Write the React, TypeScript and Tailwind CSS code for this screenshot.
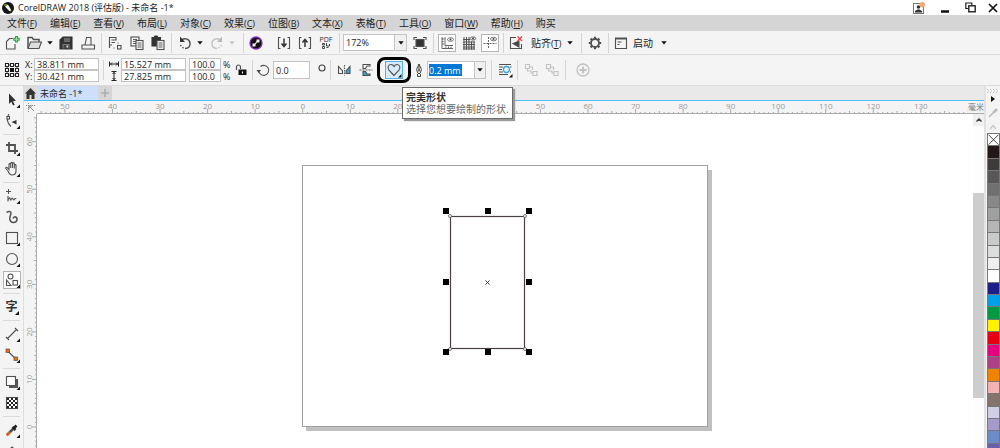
import type { ReactNode } from "react";
import clsx from "clsx";

const MENUS: [string, string?][] = [
  ["文件", "F"],
  ["编辑", "E"],
  ["查看", "V"],
  ["布局", "L"],
  ["对象", "C"],
  ["效果", "C"],
  ["位图", "B"],
  ["文本", "X"],
  ["表格", "T"],
  ["工具", "O"],
  ["窗口", "W"],
  ["帮助", "H"],
  ["购买"],
];

const SWATCHES = [
  "#231815", "#3e3a39", "#595757", "#727171", "#898989", "#9fa0a0", "#b5b5b6", "#c9caca",
  "#dcdddd", "#efefef", "#ffffff", "#1d2088", "#00a0e9", "#009944", "#fff100", "#e60012",
  "#e4007f", "#ae4084", "#f08300", "#f5b2b2", "#84736a", "#d0cde6", "#a59aca", "#6c8cc7",
  "#6a5fa8",
];

// ruler scale: screen pixels per millimetre at 172% zoom
const PX_PER_MM = 4.755;
const ORIGIN_X = 265.7;
const ORIGIN_Y = 313;
// labels that sit under the open tooltip
const COVERED_MM = [30, 40];

function Icon({ children, size = 16 }: { children: ReactNode; size?: number }) {
  return (
    <svg
      width={size}
      height={size}
      viewBox="0 0 16 16"
      fill="none"
      stroke="#505050"
      strokeWidth="1.1"
      className="shrink-0"
      aria-hidden="true"
    >
      {children}
    </svg>
  );
}

function ToolButton({
  label,
  children,
  active,
  disabled,
}: {
  label: string;
  children: ReactNode;
  active?: boolean;
  disabled?: boolean;
}) {
  return (
    <button
      type="button"
      aria-label={label}
      disabled={disabled}
      className={clsx(
        "flex h-[18px] w-[18px] shrink-0 items-center justify-center",
        active && "border border-[#b4b4b4] bg-white",
        disabled && "opacity-30",
      )}
    >
      {children}
    </button>
  );
}

function Arrow() {
  return (
    <svg width="6" height="4" viewBox="0 0 6 4" aria-hidden="true">
      <path d="M0.3 0.3h5.4L3 3.500z" fill="#111" />
    </svg>
  );
}

function Caret({ label, faded }: { label: string; faded?: boolean }) {
  return (
    <button type="button" aria-label={label} className={clsx("flex shrink-0 items-center", faded && "opacity-20")}>
      <Arrow />
    </button>
  );
}

function Group({ className, children }: { className?: string; children: ReactNode }) {
  return <div className={clsx("flex h-5 shrink-0 items-center", className)}>{children}</div>;
}

function Field({ label, value, className }: { label: string; value: string; className?: string }) {
  return (
    <input
      aria-label={label}
      defaultValue={value}
      className={clsx("border border-[#c4c4c4] bg-white pl-0.5 leading-none text-[#222] outline-none", className)}
    />
  );
}

function TitleBar() {
  return (
    <header className="flex h-[15px] shrink-0 items-center bg-white pl-0.5 text-[9px] leading-none">
      <svg width="12" height="12" viewBox="0 0 12 12" aria-hidden="true">
        <circle cx="6" cy="6" r="6" fill="#161616" />
        <path d="M2.2 3.2c2-1 4 .2 4.800 2l1.800 4" stroke="#8cc63f" strokeWidth="1.300" fill="none" />
        <path d="M3 4.500l4.600 4.800 1.400-1.200-3.200-5z" fill="#fff" />
      </svg>
      <h1 className="flex-1 pl-1 text-[#222]">CorelDRAW 2018 (评估版) - 未命名 -1*</h1>
      <div className="flex items-center gap-3 pr-0.5">
        <button type="button" aria-label="登录" className="pr-1">
          <svg width="12" height="12" viewBox="0 0 12 12" fill="none" aria-hidden="true">
            <rect x="0.5" y="1.500" width="10" height="10" stroke="#777" />
            <circle cx="5.500" cy="5" r="1.800" fill="#333" />
            <path d="M2 10.500V9l2.500-1.500h2L9 9v1.500z" fill="#333" />
            <circle cx="9.300" cy="2.700" r="2.700" fill="#f6a575" />
          </svg>
        </button>
        <button type="button" aria-label="最小化" className="pr-1">
          <svg width="8" height="12" viewBox="0 0 8 12" aria-hidden="true">
            <path d="M0 9.500h8" stroke="#111" strokeWidth="2.500" />
          </svg>
        </button>
        <button type="button" aria-label="还原">
          <svg width="11" height="11" viewBox="0 0 11 11" fill="none" stroke="#222" aria-hidden="true">
            <path d="M3.500 6.500h-2.700v-5.500h6v2.500" strokeWidth="1.200" />
            <rect x="3.800" y="3.800" width="6.400" height="6" strokeWidth="1.400" />
          </svg>
        </button>
        <button type="button" aria-label="关闭">
          <svg width="10" height="10" viewBox="0 0 10 10" stroke="#111" strokeWidth="1.700" aria-hidden="true">
            <path d="M1 1l8 8M9 1l-8 8" />
          </svg>
        </button>
      </div>
    </header>
  );
}

function MenuBar() {
  return (
    <nav className="flex h-4 shrink-0 items-center gap-[13px] bg-[#d5d5d5] pl-[7px] text-[10px] leading-none text-[#222]">
      {MENUS.map(([name, key]) => (
        <button type="button" key={name} className="flex items-center whitespace-nowrap">
          {name}
          {key && (
            <span className="text-[9px]">
              (<u>{key}</u>)
            </span>
          )}
        </button>
      ))}
    </nav>
  );
}

function StandardBar() {
  return (
    <div className="flex h-6 shrink-0 items-center border-b border-[#dcdcdc] bg-[#f4f4f4]">
      <Group className="w-[101px] justify-between pr-1 pl-[3px]">
        <ToolButton label="新建">
          <Icon>
            <path d="M9 3.500H5.500L2.500 6.500v7.500h8.500V9" />
            <path d="M12.500 1v6.500M9.250 4.250h6.500" stroke="#2aa84c" strokeWidth="3" />
            <path d="M12.500 2v4.500M10.250 4.250h4.500" stroke="#c4ecce" strokeWidth="0.700" />
          </Icon>
        </ToolButton>
        <Group className="gap-1">
          <ToolButton label="打开">
            <Icon>
              <path d="M2 13V2.500h4l1.500 2H13V7" strokeWidth="1.500" />
              <path d="M2 13.500l2.500-6.500h11L13 13.500z" fill="#dedede" />
            </Icon>
          </ToolButton>
          <Caret label="最近的文件" />
        </Group>
        <ToolButton label="保存">
          <Icon>
            <path d="M2 5l3-3h9v12H2z" fill="#333" stroke="#333" />
            <path d="M6 4h6M6 6h6" stroke="#aaa" strokeWidth="0.900" />
            <path d="M5 13.500v-4h6v4" stroke="#777" fill="#444" />
            <path d="M8.500 10.500h1.500v2H8.500z" fill="#ddd" stroke="none" />
          </Icon>
        </ToolButton>
        <ToolButton label="打印">
          <Icon>
            <path d="M5 10l1.500-7.500H11V10M5 10H2v4h12.500v-4H11M4.500 10H11" />
          </Icon>
        </ToolButton>
      </Group>
      <Group className="w-[70px] justify-between border-l border-[#d4d4d4] px-1">
        <ToolButton label="剪切">
          <Icon>
            <path d="M2.500 13V2.500H9V5H4.500M4.500 7.500H8M2.500 10H5" />
            <rect x="10.500" y="10.500" width="3.500" height="3.500" />
            <path d="M10.500 8h1M6.500 13h1" />
          </Icon>
        </ToolButton>
        <ToolButton label="复制">
          <Icon>
            <rect x="2" y="2" width="8" height="9" />
            <path d="M4 4.500h4M4 6.500h3M4 8.500h3" strokeWidth="0.900" />
            <rect x="7" y="5.500" width="7" height="9" fill="#f4f4f4" />
            <path d="M8.500 8h4M8.500 10h4M8.500 12h4" strokeWidth="0.900" />
          </Icon>
        </ToolButton>
        <ToolButton label="粘贴">
          <Icon>
            <path d="M2 2.500h2L5 1h2l1 1.500h2.500V11H2z" fill="#333" stroke="#333" />
            <rect x="7" y="5.500" width="7" height="9" fill="#f4f4f4" />
            <path d="M8.500 8h4M8.500 10h4M8.500 12h4" strokeWidth="0.900" />
          </Icon>
        </ToolButton>
      </Group>
      <Group className="w-[72px] justify-between border-l border-[#d4d4d4] pr-2 pl-1">
        <Group className="gap-[3px]">
          <ToolButton label="撤消">
            <Icon>
              <path d="M4.500 5C8 2.500 13 4 13 8.500c0 3-2 5-5 5" strokeWidth="1.400" />
              <path d="M6.500 13.200l-4-4" strokeWidth="1.400" strokeDasharray="1.500 1.500" />
              <path d="M3 1.500v5.500h5z" fill="#333" stroke="none" />
            </Icon>
          </ToolButton>
          <Caret label="撤消列表" />
        </Group>
        <Group className="gap-[3px]">
          <ToolButton label="重做" disabled>
            <Icon>
              <path d="M11.500 5C8 2.500 3 4 3 8.500c0 3 2 5 5 5" strokeWidth="1.400" />
              <path d="M9.500 13.200l4-4" strokeWidth="1.400" strokeDasharray="1.500 1.500" />
              <path d="M13 1.500v5.500H8z" fill="#333" stroke="none" />
            </Icon>
          </ToolButton>
          <Caret label="重做列表" faded />
        </Group>
      </Group>
      <Group className="w-[96px] justify-between border-l border-[#d4d4d4] pr-1 pl-[3px]">
        <ToolButton label="搜索内容">
          <Icon>
            <circle cx="8" cy="8" r="6" fill="#111" stroke="#7d2cb0" strokeWidth="1.300" />
            <path d="M6 10.500l4-5" stroke="#ddd" strokeWidth="1.200" />
            <rect x="4.500" y="8.500" width="3" height="3" fill="#eee" stroke="none" />
            <rect x="8.500" y="4.500" width="3" height="3" fill="#eee" stroke="none" />
          </Icon>
        </ToolButton>
        <Group className="gap-[3px]">
          <ToolButton label="导入">
            <Icon>
              <path d="M4.500 2.500H2.500v11h2M11.500 2.500h2v11h-2" />
              <path d="M8 3.500V11M5.500 8.500L8 11.500l2.500-3" strokeWidth="1.500" stroke="#333" />
            </Icon>
          </ToolButton>
          <ToolButton label="导出">
            <Icon>
              <path d="M4.500 2.500H2.500v11h2M11.500 2.500h2v11h-2" />
              <path d="M8 12V5M5.500 7.500L8 4.500l2.500 3" strokeWidth="1.500" stroke="#333" />
            </Icon>
          </ToolButton>
          <button
            type="button"
            aria-label="发布为 PDF"
            className="flex h-[18px] w-[18px] flex-col items-center justify-center text-[7px] leading-[7px] text-[#333]"
          >
            PDF
            <svg width="8" height="6" viewBox="0 0 8 6" fill="none" stroke="#444" aria-hidden="true">
              <path d="M0.500 0.500h2v1.500h-2zM0.500 3.500h2v2h-2zM4.500 0v3h3V1M4.500 4.500h2" />
            </svg>
          </button>
        </Group>
      </Group>
      <Group className="w-[94px] gap-1 border-l border-[#d4d4d4] pl-[3px]">
        <div className="relative flex h-[17px] w-16 items-center border border-[#c4c4c4] bg-white">
          <select aria-label="缩放级别" className="h-full w-full appearance-none pl-0.5 text-[9px] text-[#222] outline-none">
            <option>172%</option>
            <option>100%</option>
            <option>50%</option>
          </select>
          <span className="pointer-events-none absolute inset-y-0 right-0 flex w-3 items-center justify-center border-l border-[#c4c4c4] bg-[#f0f0f0]">
            <Arrow />
          </span>
        </div>
        <ToolButton label="全屏预览">
          <Icon>
            <rect x="4" y="4.500" width="8" height="7" fill="#333" />
            <path d="M2 5V2.500h3M11 2.500h3V5M14 11v2.500h-3M5 13.500H2V11" />
          </Icon>
        </ToolButton>
      </Group>
      <Group className="w-[70px] justify-between border-l border-[#d4d4d4] px-1">
        <ToolButton label="显示标尺" active>
          <Icon>
            <path d="M3 2v11.500h11M6 2v8.500h8M3 4h2M3 6.500h1.500M3 9h2M7 13v-1.500M9.500 13v-1.500M12 13v-1.500" strokeWidth="0.900" />
            <ellipse cx="11.500" cy="4.500" rx="3" ry="1.800" strokeWidth="0.800" />
            <circle cx="11.500" cy="4.500" r="1" fill="#444" stroke="none" />
          </Icon>
        </ToolButton>
        <ToolButton label="显示网格">
          <Icon>
            <path d="M2 4.500h7M2 7h12M2 9.500h12M2 12h12M2 14h12M3 2v12.500M5.500 2v12.500M8 2v12.500M10.500 6.500v8M13 6.500v8" strokeWidth="1" />
            <ellipse cx="12" cy="3.500" rx="2.800" ry="1.600" strokeWidth="0.800" />
            <circle cx="12" cy="3.500" r="1" fill="#444" stroke="none" />
          </Icon>
        </ToolButton>
        <ToolButton label="显示辅助线" active>
          <Icon>
            <path d="M1.500 8.500h13M6.500 2v12" strokeDasharray="2 1" strokeWidth="0.900" />
            <ellipse cx="11.500" cy="4" rx="3" ry="1.800" strokeWidth="0.800" />
            <circle cx="11.500" cy="4" r="1" fill="#444" stroke="none" />
          </Icon>
        </ToolButton>
      </Group>
      <Group className="w-[78px] gap-1.5 border-l border-[#d4d4d4] pl-[3px]">
        <ToolButton label="关闭贴齐">
          <Icon>
            <path d="M8 2.500H2.500v11h11V9" />
            <path d="M11 6v6L5 8.500z" fill="#444" />
            <path d="M9.500 1.500l4.500 4.500M14 1.500L9.500 6" stroke="#e84545" strokeWidth="1.400" />
          </Icon>
        </ToolButton>
        <button type="button" className="flex items-center gap-1.5 text-[10px] leading-none whitespace-nowrap text-[#222]">
          <span>
            贴齐<span className="text-[9px]">(<u>T</u>)</span>
          </span>
          <Arrow />
        </button>
      </Group>
      <Group className="w-[27px] justify-center border-l border-[#d4d4d4]">
        <ToolButton label="选项">
          <Icon>
            <circle cx="8" cy="8" r="4" strokeWidth="1.800" />
            <path d="M8 1.800v2M8 12.200v2M1.800 8h2M12.200 8h2M3.600 3.600l1.400 1.400M11 11l1.400 1.400M12.400 3.600L11 5M5 11l-1.400 1.400" strokeWidth="2.200" />
          </Icon>
        </ToolButton>
      </Group>
      <Group className="gap-[3px] border-l border-[#d4d4d4] pl-[3px]">
        <ToolButton label="应用程序启动器">
          <Icon>
            <path d="M2 3.500h12" strokeWidth="2" />
            <path d="M2.500 3v10.500h11V3M4.500 7h4M4.500 9.500h2" />
          </Icon>
        </ToolButton>
        <button type="button" className="flex items-center gap-2 text-[10px] leading-none text-[#222]">
          启动
          <Arrow />
        </button>
      </Group>
    </div>
  );
}

function PropertyBar() {
  return (
    <div className="flex h-[31px] shrink-0 items-center border-b border-[#dcdcdc] bg-[#f4f4f4] text-[9px] leading-none text-[#222]">
      <Group className="w-[103px] gap-1 pl-[3px]">
        <ToolButton label="对象原点">
          <Icon>
            <path d="M3 3h10v10H3z" strokeWidth="1" />
            <path d="M1.500 1.500h3v3h-3zM6.500 1.500h3v3h-3zM11.500 1.500h3v3h-3zM1.500 6.500h3v3h-3zM11.500 6.500h3v3h-3zM1.500 11.500h3v3h-3zM6.500 11.500h3v3h-3zM11.500 11.500h3v3h-3z" fill="#fff" stroke="#222" />
            <path d="M6 6h4v4H6z" fill="#111" stroke="none" />
          </Icon>
        </ToolButton>
        <div className="flex flex-col">
          <label className="flex h-3 items-center">
            <span className="w-[9px]">X:</span>
            <Field label="X" value="38.811 mm" className="h-3 w-[65px]" />
          </label>
          <label className="flex h-3 items-center">
            <span className="w-[9px]">Y:</span>
            <Field label="Y" value="30.421 mm" className="h-3 w-[65px]" />
          </label>
        </div>
      </Group>
      <Group className="w-[149px] gap-[3px] border-l border-[#d4d4d4] pl-[5px]">
        <div className="flex flex-col">
          <div className="flex h-3 items-center gap-0.5">
            <svg width="10" height="8" viewBox="0 0 10 8" stroke="#222" fill="none" aria-hidden="true">
              <path d="M0.500 1.500v5M9.500 1.500v5M1 4h8M3 2.500L1.500 4 3 5.500M7 2.500L8.500 4 7 5.500" />
            </svg>
            <Field label="宽度" value="15.527 mm" className="h-3 w-[65px]" />
          </div>
          <div className="flex h-3 items-center gap-0.5">
            <svg width="10" height="10" viewBox="0 0 10 10" stroke="#222" fill="none" aria-hidden="true">
              <path d="M2.500 0.500h5M2.500 9.500h5M5 1v8M3.500 3L5 1.500 6.500 3M3.500 7L5 8.500 6.500 7" />
            </svg>
            <Field label="高度" value="27.825 mm" className="h-3 w-[65px]" />
          </div>
        </div>
        <div className="flex flex-col">
          <label className="flex h-3 items-center gap-0.5">
            <Field label="水平缩放" value="100.0" className="h-3 w-8" />%
          </label>
          <label className="flex h-3 items-center gap-0.5">
            <Field label="垂直缩放" value="100.0" className="h-3 w-8" />%
          </label>
        </div>
        <ToolButton label="锁定比率">
          <Icon>
            <path d="M2.500 8V5a2 2 0 014 0v2" strokeWidth="1.200" />
            <path d="M4.500 7.500h8v5.500h-8z" fill="#111" stroke="none" />
            <path d="M8.500 9.500v2" stroke="#fff" />
          </Icon>
        </ToolButton>
      </Group>
      <Group className="w-[78px] border-l border-[#d4d4d4] pl-px">
        <label htmlFor="angle" className="flex w-[19px] justify-center">
          <Icon>
            <path d="M4.500 4.500a5 5 0 11-1.800 4" strokeWidth="1.100" />
            <path d="M0.500 8h4.500L2.700 11z" fill="#444" stroke="none" />
          </Icon>
        </label>
        <input
          id="angle"
          defaultValue="0.0"
          className="h-[18px] w-[37px] border border-[#c4c4c4] bg-white pl-0.5 text-[#222] outline-none"
        />
        <svg width="8" height="16" viewBox="0 0 8 16" fill="none" className="ml-2" aria-hidden="true">
          <circle cx="4" cy="6" r="3" stroke="#444" strokeWidth="1.100" />
        </svg>
      </Group>
      <Group className="w-[161px] gap-0.5 border-l border-[#d4d4d4] pl-1">
        <Group className="gap-1">
          <ToolButton label="水平镜像">
            <Icon>
              <path d="M2.500 4.500v7h4V9z" />
              <path d="M8.500 3v10.500" strokeDasharray="1.500 1" />
              <path d="M14 4.500v7h-4V9z" fill="#36a4d8" />
            </Icon>
          </ToolButton>
          <ToolButton label="垂直镜像">
            <Icon>
              <path d="M5 6.500v-4h7v1.500H9L7.500 6.500z" />
              <path d="M1.500 8h13" strokeDasharray="2 1" />
              <path d="M5 9.500v4h7V12H9L7.500 9.500z" fill="#36a4d8" />
            </Icon>
          </ToolButton>
        </Group>
        <div className="relative flex h-[26px] w-[34px] shrink-0 items-center justify-center rounded-lg border-[3px] border-black">
          <button
            type="button"
            aria-label="完美形状"
            aria-describedby="shape-tip"
            className="flex h-[18px] w-[18px] items-center justify-center border border-[#4db5ea] bg-[#d9ecf9]"
          >
            <Icon>
              <path d="M8 13.500L3 8.200C1 5.500 2.500 2.500 5 2.500c1.500 0 2.500 1 3 2 .5-1 1.500-2 3-2 2.500 0 4 3 2 5.700z" />
              <path d="M15.500 12v3.500H12z" fill="#111" stroke="none" />
            </Icon>
          </button>
          <div
            id="shape-tip"
            role="tooltip"
            className="absolute top-[27px] left-[22px] z-10 flex flex-col border border-[#6b6b6b] bg-white px-[3px] py-[3px] text-[10px] leading-[12px] whitespace-nowrap text-[#666] shadow-[2px_2px_1px_#999]"
          >
            <strong className="text-[#333]">完美形状</strong>
            <span>选择您想要绘制的形状.</span>
          </div>
        </div>
        <label htmlFor="outline" className="flex w-3 justify-center">
          <svg width="10" height="16" viewBox="0 0 10 16" fill="none" stroke="#444" aria-hidden="true">
            <path d="M5 2L2.500 7.500 4 11.500h2l1.500-4zM5 2v6M3.500 12v2.500h3V12" />
            <circle cx="5" cy="8.300" r="0.800" />
          </svg>
        </label>
        <div className="flex h-[18px] w-[59px] shrink-0 items-center border border-[#c4c4c4] bg-white pl-px">
          <input
            id="outline"
            defaultValue="0.2 mm"
            className="h-3 w-[33px] bg-[#0078d7] text-white outline-none"
          />
          <span className="ml-auto flex h-full w-[11px] items-center justify-center border-l border-[#c4c4c4] bg-[#f0f0f0]">
            <Caret label="轮廓宽度" />
          </span>
        </div>
      </Group>
      <Group className="w-[26px] justify-center border-l border-[#d4d4d4]">
        <ToolButton label="文本换行">
          <Icon>
            <path d="M2 2.500h12M2 5h4M2 7.500h3M2 10h4M2 12.500h9M13 5h1.500M13 10h1" />
            <circle cx="9.500" cy="7.500" r="3" stroke="#36a4d8" fill="#e4f4fc" strokeWidth="1.300" />
            <path d="M15.500 12v3.500H12z" fill="#111" stroke="none" />
          </Icon>
        </ToolButton>
      </Group>
      <Group className="w-12 justify-between border-l border-[#d4d4d4] px-1">
        <ToolButton label="到图层前面" disabled>
          <Icon>
            <path d="M2.500 2.500h4v4h-4zM10 9.500h4v4h-4zM6.500 5h3v3M8 8.500v2.500h2" />
            <path d="M4.500 6.500V9H8" />
          </Icon>
        </ToolButton>
        <ToolButton label="到图层后面" disabled>
          <Icon>
            <path d="M2.500 2.500h4v4h-4zM10 9.500h4v4h-4zM6.500 5h3v3M8 8.500v2.500h2" />
            <path d="M4.500 6.500V9H8" />
          </Icon>
        </ToolButton>
      </Group>
      <Group className="border-l border-[#d4d4d4] pl-2">
        <ToolButton label="快速自定义" disabled>
          <Icon>
            <circle cx="8" cy="8" r="6" strokeWidth="1.300" />
            <path d="M8 4.500v7M4.500 8h7" strokeWidth="1.800" />
          </Icon>
        </ToolButton>
      </Group>
    </div>
  );
}

function Tool({
  label,
  children,
  flyout = true,
  active,
}: {
  label: string;
  children: ReactNode;
  flyout?: boolean;
  active?: boolean;
}) {
  return (
    <div className="flex h-[21px] shrink-0 items-center justify-center">
      <button
        type="button"
        aria-label={label}
        className={clsx("flex h-[18px] w-[18px] items-center justify-center", active && "border border-[#b4b4b4] bg-white")}
      >
        <Icon>
          {children}
          {flyout && <path d="M16 12.500v3.500h-3.500z" fill="#111" stroke="none" />}
        </Icon>
      </button>
    </div>
  );
}

function ToolRule() {
  return (
    <div className="flex h-1.5 shrink-0 items-center">
      <div className="h-px w-full bg-[#dadada]" />
    </div>
  );
}

function Toolbox() {
  return (
    <aside className="flex w-6 shrink-0 flex-col overflow-hidden border-r border-[#dedede] bg-[#f4f4f4] px-[3px] pt-[3px]">
      <Tool label="选择工具">
        <path d="M5 1.500v10.500l2.300-2.200L9 13.500l1.700-.8-1.700-3.500 3-.4z" fill="#333" stroke="none" />
      </Tool>
      <Tool label="形状工具">
        <path d="M5 1C2 5 3 10 7 13.500" />
        <rect x="3" y="3.500" width="2.500" height="2.500" fill="#fff" />
        <path d="M7.500 9l5-2v4.500z" fill="#333" stroke="none" />
      </Tool>
      <ToolRule />
      <Tool label="裁剪工具">
        <path d="M5 2v9h9M2 5h9v9" strokeWidth="1.800" />
      </Tool>
      <Tool label="平移工具">
        <path d="M4 10L1.800 7.500c-.5-1 .8-1.600 1.500-.8L5 8.500V3.500c0-1.200 1.700-1.200 1.700 0V7 2.500c0-1.200 1.800-1.200 1.800 0V7 2.800c0-1.200 1.800-1.200 1.800 0V7.500 4.500c0-1.200 1.700-1.200 1.700 0V10c0 2.500-1.500 4-4 4-2 0-3-1.500-4-4z" />
      </Tool>
      <ToolRule />
      <Tool label="手绘工具">
        <path d="M4.500 1v5M2 3.500h5" strokeWidth="1" />
        <path d="M4 8v5.500M4 12c2-4 2-2 2.500 0 .5 1 1-2 1.800-2s.5 2 1.500 2 .5-1.500 1.500-1.500h1" />
      </Tool>
      <Tool label="艺术笔工具" flyout={false}>
        <path d="M2.500 3.500c2-1.500 4.500-1.500 4.500.5 0 2-2 4-1 7s6 3.500 7 0c.5-3-3-4.500-4-1.500" strokeWidth="1.500" />
      </Tool>
      <Tool label="矩形工具">
        <rect x="2.500" y="2.500" width="11" height="11" />
      </Tool>
      <Tool label="椭圆形工具">
        <circle cx="8" cy="8" r="5.500" />
      </Tool>
      <Tool label="多边形工具" active>
        <circle cx="6.500" cy="4.500" r="2.500" />
        <path d="M2.500 8v5.500H7z" />
        <rect x="9" y="8.500" width="4.500" height="4.500" />
      </Tool>
      <ToolRule />
      <div className="flex h-[21px] shrink-0 items-center justify-center">
        <button type="button" aria-label="文本工具" className="relative h-[18px] w-[18px] text-[12px] leading-[18px] font-bold text-[#333]">
          字
          <svg width="4" height="4" viewBox="0 0 4 4" className="absolute right-px bottom-px" aria-hidden="true">
            <path d="M4 0v4H0z" fill="#111" />
          </svg>
        </button>
      </div>
      <ToolRule />
      <Tool label="平行度量工具">
        <path d="M3.500 12.500l9-9M2 11l3 3M11 2l3 3" />
      </Tool>
      <Tool label="直线连接器">
        <path d="M4 4.500l8 7.500" />
        <rect x="2" y="2" width="3.500" height="3.500" fill="#f26a0c" strokeWidth="0.700" />
        <rect x="10" y="10" width="3.500" height="3.500" fill="#f26a0c" strokeWidth="0.700" />
      </Tool>
      <ToolRule />
      <Tool label="阴影工具">
        <path d="M5 13h8V5" stroke="#555" strokeWidth="2.200" />
        <rect x="2.500" y="2.500" width="9" height="9" fill="#fff" />
      </Tool>
      <Tool label="透明度工具" flyout={false}>
        <rect x="2.500" y="2.500" width="11" height="11" fill="#fff" />
        <path d="M3 4h10M3 8h10M3 12h10" strokeDasharray="2 2" strokeWidth="2" stroke="#222" />
        <path d="M5 6h8M5 10h8" strokeDasharray="2 2" strokeWidth="2" stroke="#222" />
      </Tool>
      <ToolRule />
      <Tool label="颜色滴管工具">
        <path d="M9 7l-6 6" strokeWidth="2.500" />
        <path d="M6 10l-3.500 3.500" stroke="#e8640c" strokeWidth="1.800" />
        <path d="M8.500 5l3 3M10 6l2.500-2.500" strokeWidth="2.600" stroke="#222" />
      </Tool>
      <Tool label="交互式填充工具">
        <path d="M8 4l5.500 5L8 14 3 9z" fill="#333" />
      </Tool>
    </aside>
  );
}

function HorizontalRuler() {
  const ticks = Array.from({ length: 206 }, (_, i) => i - 55);
  const labels = ticks.filter((mm) => mm % 10 === 0 && mm < 140 && !COVERED_MM.includes(mm));
  return (
    <svg className="h-full w-full" aria-hidden="true">
      {ticks.map((mm) => {
        const x = ORIGIN_X + mm * PX_PER_MM;
        const len = mm % 10 === 0 ? 4 : mm % 5 === 0 ? 2 : 1;
        return <path key={mm} d={`M${x} ${12 - len}V12`} stroke="#aaa" />;
      })}
      {labels.map((mm) => (
        <text key={mm} x={ORIGIN_X + mm * PX_PER_MM} y="8" textAnchor="middle" fontSize="8" fill="#999">
          {Math.abs(mm)}
        </text>
      ))}
    </svg>
  );
}

function VerticalRuler() {
  const ticks = Array.from({ length: 72 }, (_, i) => i - 5);
  return (
    <svg className="h-full w-full" aria-hidden="true">
      {ticks.map((mm) => {
        const y = ORIGIN_Y - mm * PX_PER_MM;
        const len = mm % 10 === 0 ? 4 : mm % 5 === 0 ? 2 : 1;
        return <path key={mm} d={`M${12 - len} ${y}H12`} stroke="#aaa" />;
      })}
      {ticks
        .filter((mm) => mm % 10 === 0)
        .map((mm) => {
          const y = ORIGIN_Y - mm * PX_PER_MM;
          return (
            <text key={mm} x="8" y={y} textAnchor="middle" fontSize="8" fill="#999" transform={`rotate(-90 8 ${y})`}>
              {mm}
            </text>
          );
        })}
    </svg>
  );
}

function Canvas() {
  const handles = [
    [409, 97], [451, 97], [492, 97],
    [409, 168], [492, 168],
    [409, 238], [451, 238], [492, 238],
  ];
  const nodes = [[413, 102], [488, 102], [413, 235], [488, 235]];
  return (
    <svg className="block h-full w-full" role="img" aria-label="绘图窗口">
      <path d="M671 56h4v261H269v-4h402z" fill="#c0c0c0" />
      <rect x="265.500" y="51.500" width="405" height="261" fill="#fff" stroke="#a0a0a0" />
      <rect x="413.500" y="102.500" width="74" height="132" fill="#fff" stroke="#4a4040" strokeWidth="1.200" />
      <path d="M448.500 166.500l4 4M452.500 166.500l-4 4" stroke="#333" />
      {nodes.map(([x, y]) => (
        <circle key={`${x}-${y}`} cx={x} cy={y} r="1.500" fill="#fff" stroke="#555" strokeWidth="0.800" />
      ))}
      {handles.map(([x, y]) => (
        <rect key={`${x}-${y}`} x={x - 3} y={y - 3} width="6" height="6" fill="#000" />
      ))}
    </svg>
  );
}

function Workspace() {
  return (
    <main className="flex min-w-0 flex-1 flex-col">
      <div className="flex h-[15px] shrink-0 items-stretch border-b border-[#4fbdf0] bg-[#e9e9e9] text-[9px] leading-none">
        <button type="button" aria-label="欢迎屏幕" className="flex w-[13px] items-center justify-center bg-[#dcdcdc]">
          <svg width="11" height="11" viewBox="0 0 11 11" aria-hidden="true">
            <path d="M5.500 0L0 5.500h1.500V11H4.500V7h2v4h3V5.500H11z" fill="#333" />
          </svg>
        </button>
        <button type="button" className="w-[61px] bg-[#cce0fd] pl-[3px] text-left whitespace-nowrap text-[#222]">
          未命名 -1*
        </button>
        <button type="button" aria-label="新建文档" className="flex w-3.5 items-center justify-center bg-[#d6d6d6]">
          <svg width="8" height="8" viewBox="0 0 8 8" stroke="#aaa" strokeWidth="1.500" aria-hidden="true">
            <path d="M4 0v8M0 4h8" />
          </svg>
        </button>
      </div>
      <div className="flex h-[13px] shrink-0 bg-[#f4f4f4]">
        <div className="flex w-[13px] shrink-0 items-center justify-center">
          <svg width="9" height="9" viewBox="0 0 9 9" fill="none" stroke="#888" aria-hidden="true">
            <path d="M0 2.500h9M2.500 0v9" strokeDasharray="1 1" />
            <path d="M3 3l5 5M3 6V3h3" />
          </svg>
        </div>
        <div className="min-w-0 flex-1 border-b border-[#aaa]">
          <HorizontalRuler />
        </div>
        <span className="w-4 shrink-0 border-b border-[#aaa] text-[8px] leading-[12px] whitespace-nowrap text-[#777]">毫米</span>
      </div>
      <div className="flex min-h-0 flex-1">
        <div className="w-[13px] shrink-0 border-r border-[#aaa] bg-[#f4f4f4]">
          <VerticalRuler />
        </div>
        <div className="min-w-0 flex-1 bg-white">
          <Canvas />
        </div>
        <div className="flex w-[11px] shrink-0 flex-col bg-[#fdfdfd]">
          <button type="button" aria-label="向上滚动" className="flex h-3 shrink-0 items-center justify-center bg-[#f0f0f0]">
            <svg width="6" height="4" viewBox="0 0 6 4" fill="none" stroke="#444" strokeWidth="1.500" aria-hidden="true">
              <path d="M0.500 3.500L3 1l2.500 2.500" />
            </svg>
          </button>
          <div className="flex-[67]" />
          <div className="flex-[205] bg-[#cdcdcd]" />
          <div className="flex-[50]" />
        </div>
      </div>
    </main>
  );
}

function Palette() {
  return (
    <aside className="flex w-4 shrink-0 flex-col items-center overflow-hidden border-l-2 border-[#e2e2e2] bg-[#f4f4f4] pt-[3px]">
      <svg width="12" height="4" viewBox="0 0 12 4" stroke="#bbb" fill="none" className="shrink-0" aria-hidden="true">
        <path d="M0 0.500h12" strokeDasharray="1 2" />
        <path d="M1 2h12M0 3.500h12" strokeDasharray="1 2" />
      </svg>
      <button type="button" aria-label="调色板菜单" className="flex h-3 shrink-0 items-center">
        <svg width="4" height="6" viewBox="0 0 4 6" aria-hidden="true">
          <path d="M0 0l4 3-4 3z" fill="#111" />
        </svg>
      </button>
      <button type="button" aria-label="滴管" className="flex h-4 shrink-0 items-center">
        <svg width="10" height="10" viewBox="0 0 10 10" stroke="#bbb" aria-hidden="true">
          <path d="M1 9l5.500-5.500" strokeWidth="1.600" />
          <path d="M5.500 4.500L9 1" strokeWidth="2.600" />
        </svg>
      </button>
      <button type="button" aria-label="向上滚动调色板" className="flex h-3 shrink-0 items-center">
        <svg width="8" height="6" viewBox="0 0 8 6" fill="none" stroke="#c8c8c8" strokeWidth="1.300" aria-hidden="true">
          <path d="M1 5l3-3.500L7 5" />
        </svg>
      </button>
      {/* swatches share the strip evenly, the last ones run past the window */}
      <div className="flex h-[323px] w-[13px] shrink-0 flex-col border border-b-0 border-[#777]">
        <button type="button" aria-label="无色" className="min-h-0 flex-1 border-b border-[#777] bg-white">
          <svg viewBox="0 0 11 11" className="h-full w-full" stroke="#333" strokeWidth="0.900" aria-hidden="true">
            <path d="M0.500 0.500l10 10M10.500 0.500l-10 10" />
          </svg>
        </button>
        {SWATCHES.map((c) => (
          <button
            type="button"
            key={c}
            aria-label={c}
            className="min-h-0 flex-1 border-b border-[#777]"
            style={{ backgroundColor: c }}
          />
        ))}
      </div>
    </aside>
  );
}

export default function App() {
  return (
    <div className="flex h-screen flex-col overflow-hidden bg-[#f4f4f4] font-['Open_Sans','Noto_Sans_CJK_SC',sans-serif]">
      <TitleBar />
      <MenuBar />
      <StandardBar />
      <PropertyBar />
      <div className="flex min-h-0 flex-1">
        <Toolbox />
        <Workspace />
        <Palette />
      </div>
    </div>
  );
}
